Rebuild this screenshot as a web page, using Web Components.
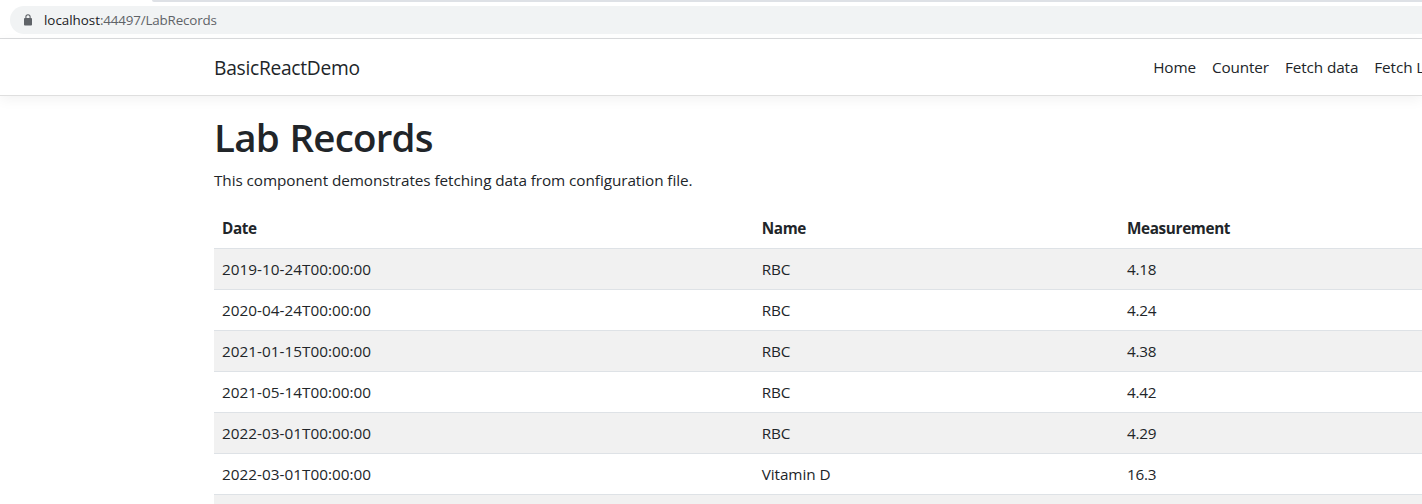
<!DOCTYPE html>
<html lang="en">
<head>
<meta charset="utf-8">
<title>BasicReactDemo</title>
<style>
html, body { margin: 0; height: 100%; overflow: hidden; }
body { background: #fff; color: #212529; font: 15.3px/24px "Open Sans", "Noto Sans", sans-serif; letter-spacing: -.07px; }
</style>
</head>
<body>
<browser-bar host="localhost" path=":44497/LabRecords"></browser-bar>
<nav-bar>
  <span slot="brand">BasicReactDemo</span>
  <nav-link>Home</nav-link>
  <nav-link style="letter-spacing:-.15px">Counter</nav-link>
  <nav-link>Fetch data</nav-link>
  <nav-link>Fetch L</nav-link>
</nav-bar>
<page-content>
  <span slot="title">Lab Records</span>
  <span slot="intro">This component demonstrates fetching data from configuration file.</span>
  <lab-table></lab-table>
</page-content>
<script>
class BaseElement extends HTMLElement {
  connectedCallback() {
    if (!this.shadowRoot) this.attachShadow({ mode: 'open' }).innerHTML = this.render();
  }
}

customElements.define('browser-bar', class extends BaseElement {
  render() {
    return `<style>
      :host { display: block; height: 38px; border-bottom: 1px solid #dadbdd; background: #fff; font-size: 13.4px; line-height: 28px; }
      .strip { height: 2px; margin-left: 152px; background: #dee1e6; border-bottom-left-radius: 3px; }
      .pill { display: flex; align-items: center; height: 28px; margin: 4px 0 0 10px; padding-left: 13px; background: #f1f3f4; border-radius: 14px 0 0 14px; color: #5f6368; }
      svg { display: block; margin-right: 11px; flex: none; }
      .url { white-space: nowrap; letter-spacing: -.17px; }
      .host { color: #202124; letter-spacing: -.02px; }
    </style>
    <div class="strip"></div>
    <div class="pill">
      <svg width="10" height="12" viewBox="0 0 10 12"><rect x="1" y="4" width="8" height="7.4" rx=".9" fill="#5f6368"/><path d="M2.9 4.4V2.8a2.1 2.1 0 0 1 4.2 0v1.6" fill="none" stroke="#5f6368" stroke-width="1.1"/></svg>
      <div class="url"><span class="host">${this.getAttribute('host')}</span>${this.getAttribute('path')}</div>
    </div>`;
  }
});

customElements.define('nav-bar', class extends BaseElement {
  render() {
    return `<style>
      :host { display: flex; align-items: center; height: 56px; padding-left: 214px; border-bottom: 1px solid #dfdfdf; box-shadow: 0 4px 12px rgba(0,0,0,.05); white-space: nowrap; }
      .brand { width: 931.2px; flex: none; padding-top: 2px; font-size: 19.2px; line-height: 30px; letter-spacing: -.27px; }
      .links { display: flex; flex: 1; min-width: 0; overflow: hidden; }
    </style>
    <div class="brand"><slot name="brand"></slot></div>
    <div class="links"><slot></slot></div>`;
  }
});

customElements.define('nav-link', class extends BaseElement {
  render() {
    return `<style>:host { display: block; flex: none; padding: 8px; letter-spacing: -.1px; }</style><slot></slot>`;
  }
});

customElements.define('page-content', class extends BaseElement {
  render() {
    return `<style>
      :host { display: block; padding: 16px 0 0 214px; }
      h1 { margin: 1px 0 7px; font-size: 38.5px; line-height: 48px; font-weight: 600; letter-spacing: -.76px; word-spacing: 1.2px; }
      p { margin: 0 0 16px; }
    </style>
    <h1><slot name="title"></slot></h1>
    <p><slot name="intro"></slot></p>
    <slot></slot>`;
  }
});

customElements.define('lab-table', class extends BaseElement {
  render() {
    const rows = [
      ['2019-10-24T00:00:00', 'RBC', '4.18'],
      ['2020-04-24T00:00:00', 'RBC', '4.24'],
      ['2021-01-15T00:00:00', 'RBC', '4.38'],
      ['2021-05-14T00:00:00', 'RBC', '4.42'],
      ['2022-03-01T00:00:00', 'RBC', '4.29'],
      ['2022-03-01T00:00:00', 'Vitamin D', '16.3']
    ];
    return `<style>
      :host { display: block; }
      .row { display: grid; grid-template-columns: 539.7px 365.3px 1fr; height: 40px; border-bottom: 1px solid #dee2e6; }
      .row > * { padding: 8px; }
      .odd { background: #f1f1f1; }
      .next { height: 9px; }
      .head { font-weight: 700; letter-spacing: -.36px; }
      .date { letter-spacing: .02px; }
      .value { letter-spacing: -.25px; }
    </style>
    <div class="row head"><div>Date</div><div>Name</div><div>Measurement</div></div>
    ${rows.map((r, i) => `<div class="row ${i % 2 ? '' : 'odd'}"><div class="date">${r[0]}</div><div>${r[1]}</div><div class="value">${r[2]}</div></div>`).join('')}
    <div class="odd next"></div>`;
  }
});
</script>
</body>
</html>
